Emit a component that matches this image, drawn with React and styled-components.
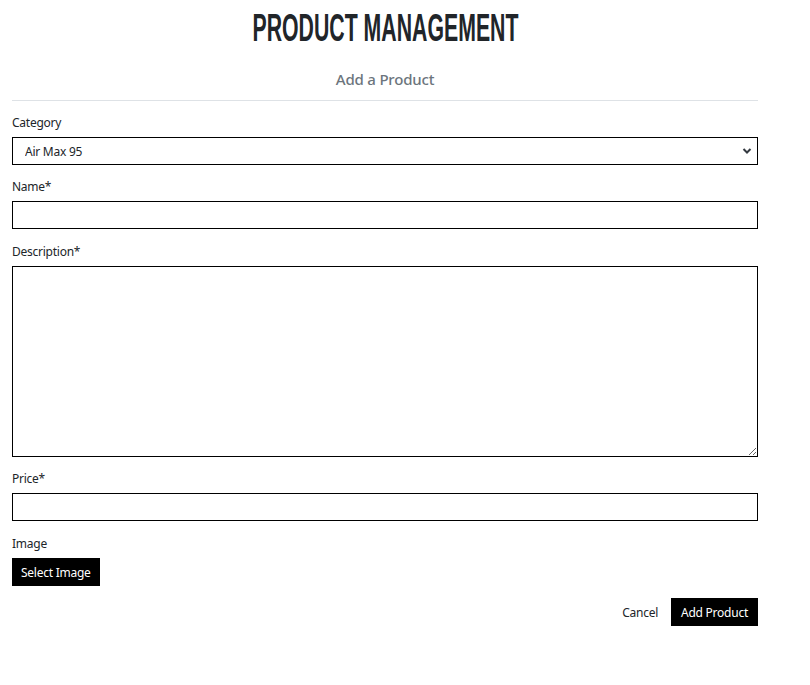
import React from "react";
import styled, { createGlobalStyle } from "styled-components";

const Global = createGlobalStyle`
  html, body { margin: 0; padding: 0; background: #fff; }
  body { font-family: "Segoe UI", "Noto Sans", "Open Sans", sans-serif; color: #212529; }
  * { box-sizing: border-box; }
`;

const Page = styled.div`
  width: 746px;
  margin-left: 12px;
  padding-top: 8px;
`;

const Title = styled.h1`
  margin: 0;
  text-align: center;
  font-family: "Liberation Sans Narrow", "Liberation Sans", sans-serif;
  font-weight: 700;
  font-size: 38px;
  line-height: 40px;
  color: #212529;
  text-transform: uppercase;
  span { display: inline-block; transform: scaleX(0.56); transform-origin: center; }
`;

const Subtitle = styled.h2`
  margin: 21px 0 0;
  padding-bottom: 11px;
  text-align: center;
  font-size: 15px;
  font-weight: 500;
  letter-spacing: -0.2px;
  line-height: 20px;
  color: #6c757d;
  border-bottom: 1px solid #dee2e6;
`;

const Form = styled.form`
  display: flex;
  flex-direction: column;
  padding-top: 14px;
`;

const Group = styled.div`
  display: flex;
  flex-direction: column;
  gap: ${(p) => p.$gap || 6}px;
  margin-bottom: ${(p) => p.$mb || 14}px;
`;

const Label = styled.label`
  font-size: 12px;
  letter-spacing: -0.25px;
  line-height: 16px;
  color: #212529;
`;

const SelectWrap = styled.div`
  position: relative;
  height: 28px;
`;

const Select = styled.select`
  appearance: none;
  width: 100%;
  height: 28px;
  border: 1px solid #000;
  border-radius: 0;
  background: #fff;
  padding: 0 30px 0 12px;
  font-family: inherit;
  font-size: 12px;
  letter-spacing: -0.25px;
  color: #212529;
`;

const Chevron = styled.svg`
  position: absolute;
  right: 6px;
  top: 10px;
  width: 10px;
  height: 8px;
  pointer-events: none;
`;

const Input = styled.input`
  width: 100%;
  height: 28px;
  border: 1px solid #000;
  border-radius: 0;
  padding: 0 8px;
  font-family: inherit;
  font-size: 12px;
  outline: none;
`;

const TextArea = styled.textarea`
  display: block;
  width: 100%;
  height: 191px;
  border: 1px solid #000;
  border-radius: 0;
  padding: 6px 8px;
  font-family: inherit;
  font-size: 12px;
  resize: vertical;
  outline: none;
`;

const BlackButton = styled.button`
  height: 28px;
  padding: 0 ${(p) => p.$px || 10}px;
  background: #000;
  color: #fff;
  border: none;
  border-radius: 0;
  font-family: inherit;
  font-size: 12px;
  letter-spacing: -0.25px;
  cursor: pointer;
  align-self: ${(p) => p.$self || "auto"};
`;

const Actions = styled.div`
  display: flex;
  justify-content: flex-end;
  align-items: center;
  gap: 13px;
  margin-top: -2px;
`;

const LinkButton = styled.button`
  background: none;
  border: none;
  padding: 0;
  font-family: inherit;
  font-size: 12px;
  letter-spacing: -0.25px;
  color: #212529;
  cursor: pointer;
`;

export default function App() {
  return (
    <>
      <Global />
      <Page>
        <Title><span>Product Management</span></Title>
        <Subtitle>Add a Product</Subtitle>
        <Form onSubmit={(e) => e.preventDefault()}>
          <Group>
            <Label>Category</Label>
            <SelectWrap>
              <Select defaultValue="am95">
                <option value="am95">Air Max 95</option>
              </Select>
              <Chevron viewBox="0 0 10 8">
                <path d="M1.5 2 L5 5.5 L8.5 2" fill="none" stroke="#343a40" strokeWidth="2" />
              </Chevron>
            </SelectWrap>
          </Group>
          <Group $mb={15}>
            <Label>Name*</Label>
            <Input type="text" />
          </Group>
          <Group>
            <Label>Description*</Label>
            <TextArea />
          </Group>
          <Group $mb={15}>
            <Label>Price*</Label>
            <Input type="text" />
          </Group>
          <Group>
            <Label>Image</Label>
            <BlackButton type="button" $self="flex-start" $px={9}>Select Image</BlackButton>
          </Group>
          <Actions>
            <LinkButton type="button">Cancel</LinkButton>
            <BlackButton type="submit">Add Product</BlackButton>
          </Actions>
        </Form>
      </Page>
    </>
  );
}
